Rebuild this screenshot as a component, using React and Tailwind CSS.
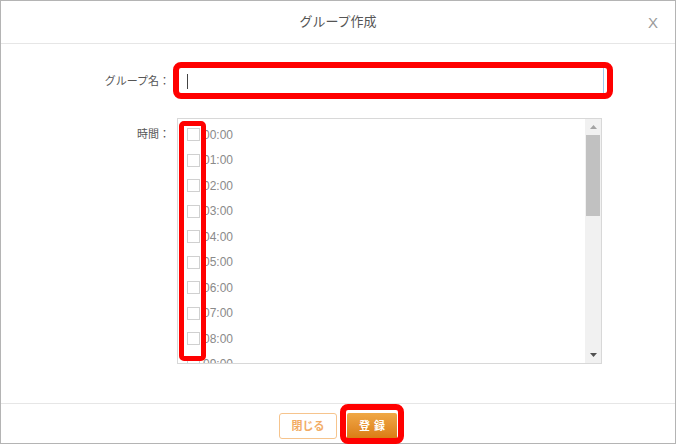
import React from 'react';

const hours = Array.from({ length: 24 }, (_, i) => `${String(i).padStart(2, '0')}:00`);

const font = { fontFamily: '"Liberation Sans", "Noto Sans CJK JP", sans-serif' };

export default function App() {
  return (
    <div className="w-[677px] h-[445px] bg-white relative" style={font}>
      <div className="w-[676px] h-[444px] border border-[#b4b4b4] flex flex-col">
        {/* ヘッダー */}
        <div className="h-[43px] shrink-0 border-b border-[#e6e6e6] flex items-center justify-center relative">
          <span className="text-[13px] text-[#555]">グループ作成</span>
          <span className="absolute right-[17px] top-[11px] text-[15px] text-[#9a9a9a] font-light">X</span>
        </div>

        {/* 本体 */}
        <div className="flex-1 flex flex-col pt-[22px]">
          <div className="flex items-center h-[30px]">
            <div className="w-[171px] shrink-0 text-right text-[11px] text-[#555] pr-[2px]">グループ名：</div>
            <div className="ml-[6px] w-[426px] h-[29px] border border-[#9ecaed] flex items-center pl-[8px]">
              <span className="w-px h-[15px] bg-[#444]" />
            </div>
          </div>

          <div className="flex mt-[22px]">
            <div className="w-[171px] shrink-0 text-right text-[11px] text-[#555] pr-[2px] pt-[8px]">時間：</div>
            <div className="ml-[5px] w-[425px] h-[246px] border border-[#d8d8d8] flex overflow-hidden">
              <div className="flex-1 pt-[3px] pl-[9px] overflow-hidden">
                {hours.map((h) => (
                  <div key={h} className="h-[25.5px] flex items-center gap-[3px]">
                    <span className="w-[13px] h-[13px] border border-[#d0d0d0] bg-white shrink-0" />
                    <span className="text-[12px] text-[#8a8a8a]">{h}</span>
                  </div>
                ))}
              </div>
              <div className="w-[16px] shrink-0 bg-[#f1f1f1] flex flex-col items-center">
                <div className="h-[16px] flex items-center justify-center">
                  <svg width="7" height="4" viewBox="0 0 7 4"><path d="M3.5 0L7 4H0z" fill="#a3a3a3" /></svg>
                </div>
                <div className="w-[14px] h-[81px] bg-[#c1c1c1]" />
                <div className="flex-1" />
                <div className="h-[16px] flex items-center justify-center">
                  <svg width="7" height="4" viewBox="0 0 7 4"><path d="M0 0H7L3.5 4z" fill="#505050" /></svg>
                </div>
              </div>
            </div>
          </div>
        </div>

        {/* フッター */}
        <div className="h-[40px] shrink-0 border-t border-[#e6e6e6] flex justify-center gap-[10px] pt-[9px]">
          <button className="w-[58px] h-[26px] rounded-[3px] border border-[#f6c48d] bg-white text-[11px] font-bold text-[#f2ac64]">
            閉じる
          </button>
          <button className="w-[50px] h-[27px] rounded-[2px] bg-gradient-to-b from-[#f0a845] to-[#d9790c] text-[11px] font-bold text-white tracking-[4px] pl-[4px]">
            登録
          </button>
        </div>
      </div>

      {/* 注釈の赤枠 */}
      <div className="absolute left-[173px] top-[62px] w-[440px] h-[37px] border-[6px] border-[#ff0000] rounded-[8px]" />
      <div className="absolute left-[179px] top-[121px] w-[27px] h-[240px] border-[5px] border-[#ff0000] rounded-[5px]" />
      <div className="absolute left-[340px] top-[404px] w-[64px] h-[40px] border-[6px] border-[#ff0000] rounded-[8px]" />
    </div>
  );
}
